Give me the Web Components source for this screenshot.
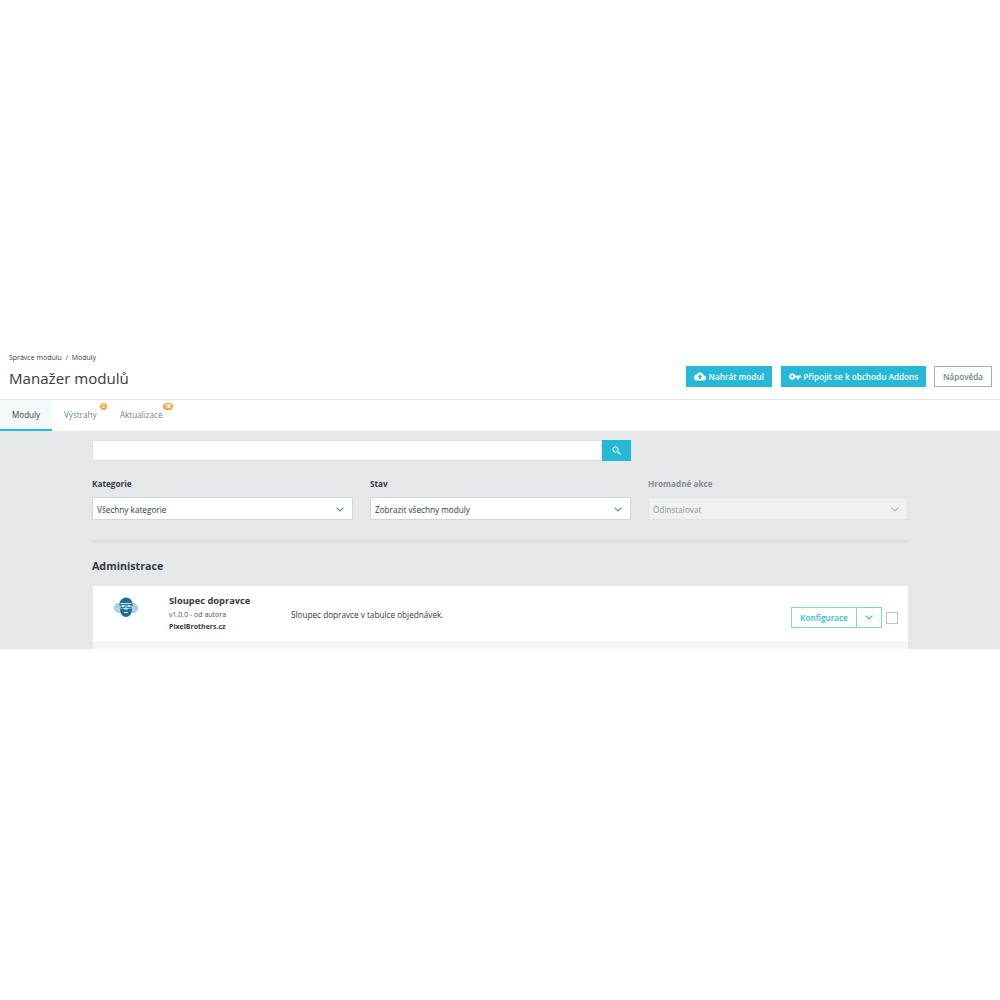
<!doctype html>
<html><head><meta charset="utf-8">
<style>
html,body{margin:0;background:#fff;font-family:"Open Sans",sans-serif;color:#363a41}
#page{padding-top:349px}
</style></head><body>
<div id="page">
<pb-header></pb-header>
<pb-tabs></pb-tabs>
<pb-main></pb-main>
</div>
<script>
const chevron=(c)=>`<svg width="8" height="5" viewBox="0 0 8 5" fill="none" stroke="${c}" stroke-width="1.1"><path d="M.6.6 4 4 7.400.6"/></svg>`;
function def(name,html,init){customElements.define(name,class extends HTMLElement{constructor(){super();this.attachShadow({mode:'open'}).innerHTML=html;}connectedCallback(){init&&init(this)}})}

def('pb-button',`<style>
:host{display:inline-flex;box-sizing:border-box;height:21px;align-items:center;justify-content:center;gap:2.500px;font-size:8.200px;font-weight:600;white-space:nowrap;background:#25b9d7;color:#fff;border:1px solid #25b9d7}
:host([kind=plain]){background:#fff;color:#6c868e;border-color:#a2b1b8}
</style><slot></slot>`);

def('pb-header',`<style>
:host{display:block;box-sizing:border-box;height:51px;border-bottom:1px solid #e4e6e8;background:#fff}
.row{display:flex;justify-content:space-between;align-items:flex-start;padding:0 8px 0 9px}
.crumb{font-size:7px;line-height:10px;padding-top:4px;color:#363a41}
h1{margin:4px 0 0;font-size:15.100px;font-weight:400;line-height:22px;color:#363a41}
.btns{display:flex;gap:9px;padding-top:17px}
.btns .last{margin-left:-1px}
svg{display:block}
</style><div class="row"><div><div class="crumb">Správce modulu &nbsp;/&nbsp; Moduly</div><h1>Manažer modulů</h1></div>
<div class="btns">
<pb-button style="width:86px"><svg width="12" height="9" viewBox="0 0 24 18" fill="#fff"><path d="M19.400 6.800A7.500 7.500 0 0 0 5.400 4.800 6 6 0 0 0 6 16.800h13a5 5 0 0 0 .4-10zM14 10v4h-4v-4H7l5-5 5 5z"/></svg>Nahrát modul</pb-button>
<pb-button style="width:145px"><svg width="12" height="7" viewBox="0 0 24 13" fill="#fff"><path d="M12.600 4.500a6.300 6.300 0 1 0 0 4H16v4h4v-4h4v-4zM6.500 9a2.500 2.500 0 1 1 0-5 2.500 2.500 0 0 1 0 5z"/></svg>Připojit se k obchodu Addons</pb-button>
<pb-button class="last" kind="plain" style="width:58px">Nápověda</pb-button>
</div></div>`);

def('pb-tab',`<style>
:host{display:flex;position:relative;box-sizing:border-box;height:31px;padding-bottom:2px;align-items:center;font-size:8.100px;color:#6c868e;white-space:nowrap}
:host([active]){background:#f4f9fa;color:#363a41;box-shadow:inset 0 -2px 0 #25b9d7}
span.b{position:absolute;top:3px;height:7px;border-radius:4px;background:#f2a93f;color:#fff;font-size:5px;font-weight:700;line-height:7px;text-align:center}
</style><slot></slot><span class="b"></span>`,el=>{
 const b=el.shadowRoot.querySelector('.b');const t=el.getAttribute('badge');
 if(t){b.textContent=t;b.style.left=el.getAttribute('bx')+'px';b.style.width=el.getAttribute('bw')+'px'}else b.remove();
});

def('pb-tabs',`<style>
:host{display:flex;background:#fff;height:31px}
</style>
<pb-tab active style="width:52px;padding-left:12px">Moduly</pb-tab>
<pb-tab badge="2" bx="48" bw="7" style="width:68px;padding-left:12px">Výstrahy</pb-tab>
<pb-tab badge="18" bx="43" bw="10">Aktualizace</pb-tab>`);

def('pb-select',`<style>
:host{display:block;font-size:8.200px}
label{display:block;font-weight:700;line-height:12px;margin-bottom:7px;color:#363a41}
.box{box-sizing:border-box;height:23px;background:#fff;border:1px solid #ccd8db;display:flex;align-items:center;justify-content:space-between;padding:1px 8px 0 4px;color:#363a41}
:host([disabled]) label{color:#8a8f94}
:host([disabled]) .box{background:#eff1f1;color:#8a9499;border-color:#dfe3e4}
</style><label></label><div class="box"><span></span><i style="display:flex"></i></div>`,el=>{
 const s=el.shadowRoot;s.querySelector('label').textContent=el.getAttribute('label');
 s.querySelector('span').textContent=el.getAttribute('value');
 s.querySelector('i').innerHTML=chevron(el.hasAttribute('disabled')?'#a9b3b7':'#6c868e');
});

def('pb-search',`<style>
:host{display:flex;height:21px}
.in{flex:1;background:#fff;border:1px solid #dbe3e5;box-sizing:border-box}
.go{width:29px;background:#25b9d7;display:flex;align-items:center;justify-content:center}
</style><div class="in"></div><div class="go"><svg width="9" height="9" viewBox="0 0 9 9" fill="none" stroke="#fff"><circle cx="3.500" cy="3.500" r="2.600" stroke-width="1"/><path d="M5.500 5.500 8.500 8.500" stroke-width="1.200"/></svg></div>`);

def('pb-module',`<style>
:host{display:block;background:#fff;margin-left:1px;font-size:8.200px}
.row{box-sizing:border-box;height:55px;display:grid;grid-template-columns:76px 122px 1fr auto;align-items:start}
.logo{padding:11px 0 0 21px}
.info{padding-top:8px}
.t{font-size:9.300px;font-weight:700;line-height:13px}
.v{font-size:7px;line-height:11px;margin-top:2px;color:#4d5258}
.a{font-size:7px;font-weight:700;line-height:11px;margin-top:1px}
.d{padding-top:23px;line-height:12px}
.act{display:flex;align-items:center;padding:21px 10px 0 0}
.split{display:flex;height:21px;box-sizing:border-box;border:1px solid #7cd5e7;color:#25b9d7;font-weight:600;font-size:8.200px;align-items:center}
.split b{font-weight:600;width:64px;text-align:center}
.split i{width:24px;height:100%;border-left:1px solid #7cd5e7;display:flex;align-items:center;justify-content:center}
.cb{width:12px;height:12px;box-sizing:border-box;border:1px solid #b7c3c6;margin-left:4px}
.foot{height:8px;background:#f4f7f7}
</style><div class="row">
<div class="logo"><svg width="24" height="20" viewBox="0 0 24 20">
<circle cx="5" cy="11" r="5" fill="#9cc8dc"/><circle cx="19" cy="11" r="5" fill="#9cc8dc"/>
<path d="M1 11h6M1.500 8.500h5M1.500 13.500h5M17 11h6M17.500 8.500h5M17.500 13.500h5" stroke="#e6f1f6" stroke-width=".6"/>
<path d="M5.500 7a6.500 6.500 0 0 1 13 0v2h-13z" fill="#1f6f98"/>
<path d="M6.500 6h11v7h-11z" fill="#d5e8f0"/>
<path d="M6 7.500h12" stroke="#1f6f98" stroke-width=".9"/>
<rect x="7" y="7.500" width="4" height="3" fill="none" stroke="#1f6f98" stroke-width=".9"/><rect x="13" y="7.500" width="4" height="3" fill="none" stroke="#1f6f98" stroke-width=".9"/>
<path d="M6 11.500h3.500l1 1h3l1-1H18v1.500q-1 7-6 7t-6-7z" fill="#1f6f98"/>
<path d="M10 15h4v1h-4z" fill="#d5e8f0"/></svg></div>
<div class="info"><div class="t">Sloupec dopravce</div><div class="v">v1.0.0 - od autora</div><div class="a">PixelBrothers.cz</div></div>
<div class="d">Sloupec dopravce v tabulce objednávek.</div>
<div class="act"><div class="split"><b>Konfigurace</b><i>${chevron('#25b9d7')}</i></div><div class="cb"></div></div>
</div><div class="foot"></div>`);

def('pb-main',`<style>
:host{display:block;box-sizing:border-box;height:218px;background:#e5e7e9;padding:9px 92px 0 92px;overflow:hidden}
.f{display:grid;grid-template-columns:261px 261px 260px;gap:17px;margin-top:17px}
pb-search{width:539px}
hr{height:2px;border:0;background:#d9dfe0;margin:20px 0 0}
h2{margin:17px 0 12px;font-size:10.700px;font-weight:700;line-height:15px;color:#363a41}
</style>
<pb-search></pb-search>
<div class="f">
<pb-select label="Kategorie" value="Všechny kategorie"></pb-select>
<pb-select label="Stav" value="Zobrazit všechny moduly"></pb-select>
<pb-select label="Hromadné akce" value="Odinstalovat" disabled></pb-select>
</div>
<hr>
<h2>Administrace</h2>
<pb-module></pb-module>`);
</script>
</body></html>
